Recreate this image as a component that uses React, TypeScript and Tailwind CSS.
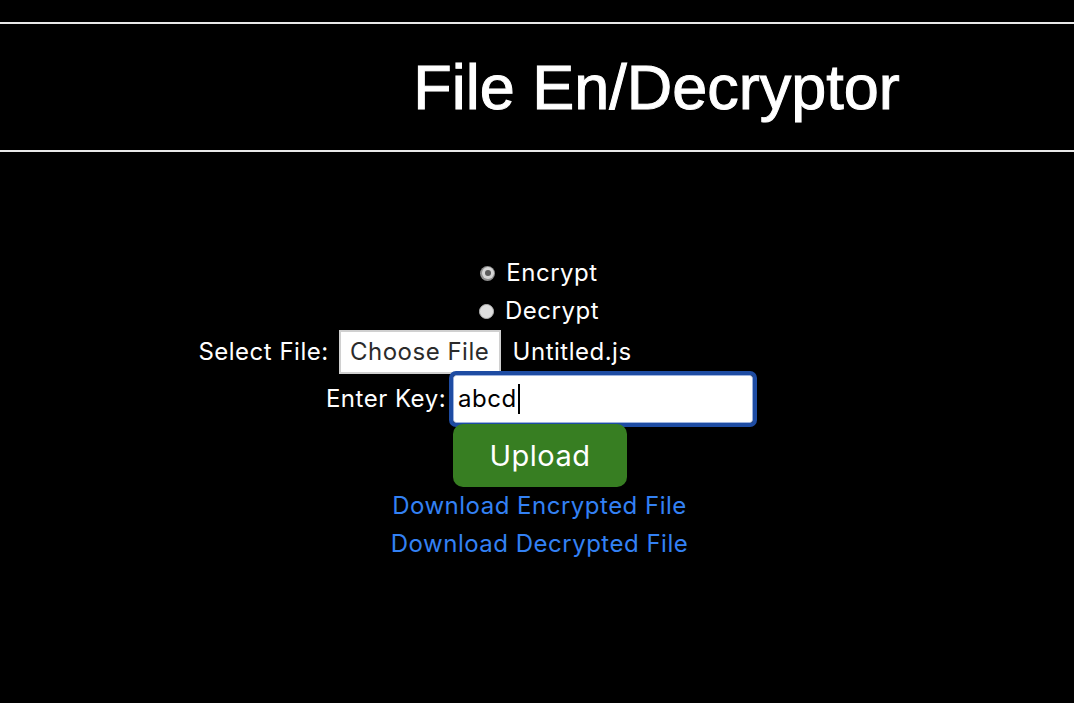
function Radio({ checked }: { checked?: boolean }) {
  if (checked) {
    return (
      <span className="flex h-[15px] w-[15px] items-center justify-center rounded-full bg-[#8f8f8f]">
        <span className="flex h-[12px] w-[12px] items-center justify-center rounded-full bg-[#d6d6d6]">
          <span className="h-[6px] w-[6px] rounded-full bg-[#5c5c5c]" />
        </span>
      </span>
    )
  }
  return <span className="h-[15px] w-[15px] rounded-full border border-[#b5b5b5] bg-[#dedede]" />
}

export default function App() {
  return (
    <div className="min-h-screen bg-black pt-[22px] font-['Inter',sans-serif] text-white">
      <header className="flex h-[130px] items-center justify-center border-y-2 border-[#e8e8e8] pl-[239px]">
        <h1 className="font-['Liberation_Sans',Arial,sans-serif] text-[63px] leading-none text-white [-webkit-text-stroke:1px_white]">File En/Decryptor</h1>
      </header>

      <main className="mt-[102px] flex flex-col items-center text-[24px] tracking-[0.5px]">
        <label className="ml-[4px] flex h-[38px] items-center gap-[11px]">
          <Radio checked />
          <span>Encrypt</span>
        </label>
        <label className="ml-[4px] flex h-[38px] items-center gap-[11px]">
          <Radio />
          <span>Decrypt</span>
        </label>

        <div className="flex h-[44px] items-center gap-[10px]">
          <span>Select File:</span>
          <div className="flex w-[537px] items-center gap-[12px]">
            <span className="flex h-[44px] w-[162px] items-center justify-center border-2 border-[#d0d0d0] bg-white text-[#2b2b2b]">
              Choose File
            </span>
            <span>Untitled.js</span>
          </div>
        </div>

        <div className="ml-[5px] flex h-[50px] items-center gap-[7px]">
          <span>Enter Key:</span>
          <div className="flex h-[48px] w-[300px] items-center rounded-[3px] border border-[#9db3df] bg-white pl-[4px] text-black outline-[4px] outline-solid outline-[#1e4ca3]">
            abcd<span className="ml-[1px] h-[30px] w-[2px] bg-black" />
          </div>
        </div>

        <button className="ml-[6px] h-[63px] w-[174px] rounded-[10px] bg-[#377e22] text-[29px] tracking-[0.5px] text-white">Upload</button>

        <a className="ml-[5px] flex h-[38px] items-center text-[#3381f4]" href="#">Download Encrypted File</a>
        <a className="ml-[5px] flex h-[38px] items-center text-[#3381f4]" href="#">Download Decrypted File</a>
      </main>
    </div>
  )
}
